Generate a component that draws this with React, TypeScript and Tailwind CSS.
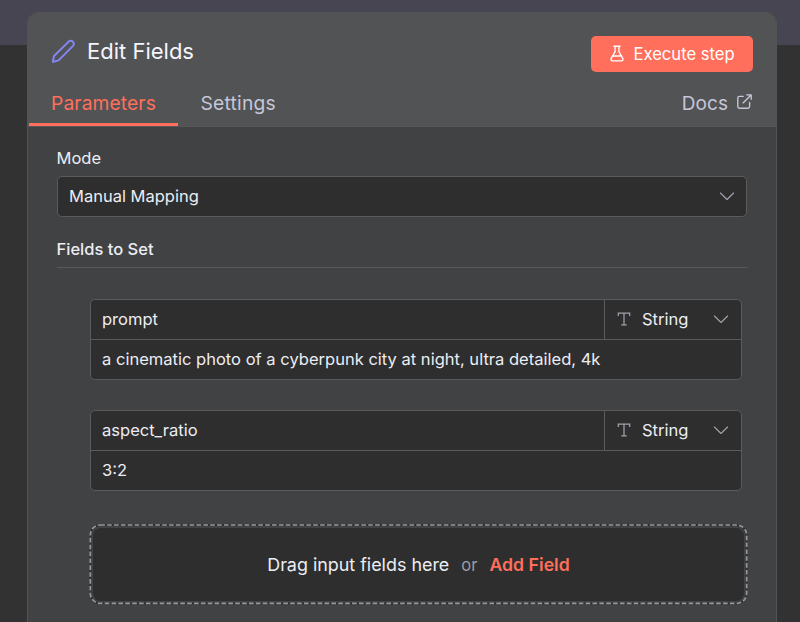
import React from "react";

function Chevron() {
  return (
    <svg width="16" height="10" viewBox="0 0 16 10" fill="none" stroke="#a0a2ac" strokeWidth="1.15" strokeLinecap="round" strokeLinejoin="round">
      <path d="M1.4 2 8 8.5 14.6 2" />
    </svg>
  );
}

function TypeIcon() {
  return (
    <svg width="14" height="14" viewBox="0 0 14 14" fill="none" stroke="#a0a2ac" strokeWidth="1.25">
      <path d="M1.3 4V1.1h11.4V4M7 1.1v11.7M4.3 12.9h5.4" />
    </svg>
  );
}

function Assignment({ name, value }: { name: string; value: string }) {
  return (
    <div className="h-[81px] w-[652px] overflow-hidden rounded-[5px] border border-[#5a5b5d] bg-[#2e2e2e] text-[16.55px] leading-[20px] text-[#ecedf3]">
      <div className="flex h-[40px] border-b border-[#5a5b5d] pb-[1px]">
        <div className="flex w-[513px] items-center pl-[11px]">
          <span>{name}</span>
        </div>
        <div className="-mb-[1px] flex flex-1 items-center border-l border-[#5a5b5d] pb-[1px] pl-[12px] pr-[12px]">
          <TypeIcon />
          <span className="ml-[11px] flex-1">String</span>
          <Chevron />
        </div>
      </div>
      <div className="flex h-[39px] items-center pb-[1px] pl-[11px]">
        <span>{value}</span>
      </div>
    </div>
  );
}

export default function App() {
  return (
    <div className="h-[622px] w-[800px] overflow-hidden bg-[linear-gradient(#474552_45px,#323232_45px)] pl-[27px] pt-[12px] font-['Inter',sans-serif]">
      <div className="h-[630px] w-[750px] overflow-hidden rounded-[11px] border border-[#525355] bg-[#414244]">
        <header className="flex h-[114px] flex-col justify-between border-b border-[#565759] bg-[#525355]">
          <div className="flex items-start justify-between pl-[23px] pr-[23px] pt-[23px]">
            <div className="flex h-[30px] items-center">
              <svg width="25" height="25" viewBox="0 0 25 25" fill="none" stroke="#8486f2" strokeWidth="2" strokeLinejoin="round">
                <path d="M1.9 22.6 3 17 17.7 2.6a3.05 3.05 0 0 1 4.3 4.3L7.6 21.4 1.9 22.9Z" />
              </svg>
              <h1 className="ml-[11px] text-[22px] leading-[28px] text-[#f5f5fb]">Edit Fields</h1>
            </div>
            <button className="flex h-[36px] w-[162px] items-center rounded-[5px] bg-[#ff6f5c] pb-[1px] pl-[19px] text-[16.6px] leading-[20px] text-white">
              <svg width="14" height="17" viewBox="0 0 14 17" fill="none" stroke="currentColor" strokeWidth="1.35" strokeLinecap="round" strokeLinejoin="round">
                <path d="M3.9 1.2h6.2M5.1 1.2v5.4L1.2 13.4Q.4 15.8 2.6 15.8h8.8q2.2 0 1.4-2.4L8.9 6.6V1.2M2.9 11h8.2" />
              </svg>
              <span className="ml-[9.5px] whitespace-nowrap">Execute step</span>
            </button>
          </div>
          <nav className="flex h-[43px] items-start text-[19.3px] leading-[24px] tracking-[0.08px] text-[#c5c7d8]">
            <div className="ml-[1px] flex h-[43px] w-[149px] border-b-[3px] border-[#ff6f5c] pl-[22px] pt-[8px] text-[#ff6f5c]">Parameters</div>
            <span className="ml-[22.5px] flex-1 pt-[8px] tracking-[0.2px]">Settings</span>
            <div className="flex items-start pr-[24px] pt-[9px]">
              <span className="text-[19px]">Docs</span>
              <svg className="ml-[9px] mt-[2px]" width="15" height="15" viewBox="0 0 15 15" fill="none" stroke="currentColor" strokeWidth="1.35" strokeLinecap="round" strokeLinejoin="round">
                <path d="M6.2 2.4H2.5Q.8 2.4.8 4.1v8.4q0 1.7 1.7 1.7h8.4q1.7 0 1.7-1.7V8.3M9.7.8h4.5v4.5M14 1 6.1 8.9" />
              </svg>
            </div>
          </nav>
        </header>
        <main className="pl-[29px] text-[16.5px] text-[#ecedf3]">
          <label className="-ml-[0.5px] block pt-[21px] leading-[20px]">Mode</label>
          <div className="mt-[8px] flex h-[41px] w-[690px] items-center justify-between rounded-[5px] border border-[#5a5b5d] bg-[#2e2e2e] pb-[1px] pl-[11px] pr-[11px] leading-[20px]">
            <span>Manual Mapping</span>
            <Chevron />
          </div>
          <h2 className="mt-[22px] h-[29px] w-[691px] border-b border-[#58595b] font-medium leading-[20px]">
            <span className="-ml-[0.5px]">Fields to Set</span>
          </h2>
          <div className="flex flex-col gap-[30px] pl-[33px] pt-[31px]">
            <Assignment name="prompt" value="a cinematic photo of a cyberpunk city at night, ultra detailed, 4k" />
            <Assignment name="aspect_ratio" value="3:2" />
            <div className="relative ml-[-1px] mt-[3px] h-[81px] w-[659px] p-[4px]">
              <svg className="absolute inset-0" width="659" height="81" fill="none" strokeWidth="2">
                <rect x="1.3" y="1" width="656.4" height="78.4" rx="10" stroke="#303133" />
                <rect x="1.3" y="1" width="656.4" height="78.4" rx="10" stroke="#97989b" strokeWidth="1.7" strokeDasharray="4.6 2.27" />
              </svg>
              <div className="flex h-full items-center justify-center rounded-[8px] bg-[#2e2e2e] text-[17.9px] leading-[24px]">
                <span>Drag input fields here</span>
                <span className="mx-[12px] text-[16.6px] text-[#989ba8]">or</span>
                <span className="text-[17.7px] font-semibold text-[#ff6f5c]">Add Field</span>
              </div>
            </div>
          </div>
        </main>
      </div>
    </div>
  );
}
